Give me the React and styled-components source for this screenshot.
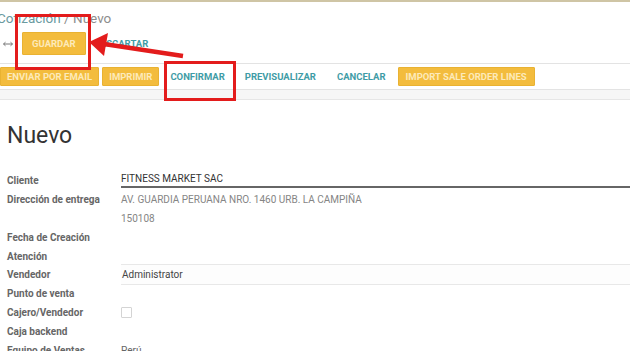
import styled, { createGlobalStyle } from 'styled-components';

const Global = createGlobalStyle`
   html, body {
      margin: 0;
      padding: 0;
      background: #ffffff;
   }
   body {
      font-family: Roboto, "Liberation Sans", Arial, sans-serif;
      overflow: hidden;
   }
`;

const Page = styled.div`
   position: relative;
   width: 630px;
   height: 351px;
   overflow: hidden;
   border-top: 2px solid #cfc5a5;
   box-sizing: border-box;
`;

const ControlPanel = styled.header`
   height: 61px;
   border-bottom: 1px solid #e3e3e3;
   display: flex;
   flex-direction: column;
`;

const Breadcrumb = styled.div`
   margin: 6px 0 0 -3px;
   font-size: 13.5px;
   line-height: 20px;
   color: #8d8d8d;
   white-space: nowrap;

   .crumb {
      color: #6a9a9f;
   }
`;

const ButtonRow = styled.div`
   display: flex;
   align-items: center;
   margin-top: 4px;
   padding-left: 3px;
   gap: 8px;
`;

const ToggleIcon = styled.span`
   width: 11px;
   display: flex;
   align-items: center;
   color: #777;
`;

const Button = styled.button`
   height: ${(p) => (p.$big ? 23 : 19)}px;
   padding: 0 ${(p) => p.$pad}px;
   margin-left: ${(p) => p.$shift || 0}px;
   border: 1px solid ${(p) => (p.$primary ? '#e9b232' : 'transparent')};
   border-radius: 1px;
   background: ${(p) => (p.$primary ? '#f3bc3d' : 'transparent')};
   color: ${(p) => (p.$primary ? '#fdeab9' : '#3f9ca6')};
   font-family: Roboto, "Liberation Sans", Arial, sans-serif;
   font-weight: 700;
   font-size: 9.5px;
   text-transform: uppercase;
   white-space: nowrap;
   cursor: pointer;
`;

const StatusBar = styled.div`
   height: 25px;
   border-bottom: 1px solid #e3e3e3;
   display: flex;
   align-items: center;
   gap: 3px;
`;

const Gap = styled.div`
   height: 9px;
   background: #f6f6f6;
   border-bottom: 1px solid #e6e6e6;
`;

const Sheet = styled.main`
   padding: 22px 0 0 7px;
`;

const Title = styled.h1`
   margin: 0 0 21px;
   font-size: 23px;
   line-height: 28px;
   font-weight: 400;
   color: #333;
`;

const Fields = styled.div`
   display: grid;
   grid-template-columns: 114px 1fr;
   grid-auto-rows: 18.9px;
   align-items: center;
`;

const Label = styled.div`
   font-size: 10px;
   font-weight: 700;
   color: #666;
   white-space: nowrap;
`;

const Value = styled.div`
   font-size: 10px;
   color: ${(p) => p.$color || '#444'};
   white-space: nowrap;
`;

const UnderlinedValue = styled.div`
   font-size: 10px;
   color: #333;
   height: 15px;
   line-height: 16px;
   margin-top: -1px;
   border-bottom: 2px solid #666;
   white-space: nowrap;
`;

const InputBox = styled.div`
   height: 19px;
   line-height: 19px;
   border-top: 1px solid #e8e8e8;
   border-bottom: 1px solid #e8e8e8;
   background: #fdfdfd;
   font-size: 10px;
   color: #444;
   padding-left: 1px;
`;

const Checkbox = styled.span`
   display: block;
   width: 9px;
   height: 9px;
   border: 1px solid #d4d4d4;
   border-radius: 1px;
   background: #fff;
`;

const Highlight = styled.div`
   position: absolute;
   left: ${(p) => p.$x}px;
   top: ${(p) => p.$y}px;
   width: ${(p) => p.$w}px;
   height: ${(p) => p.$h}px;
   border: 3px solid #e31c1c;
   box-sizing: border-box;
   pointer-events: none;
`;

const ArrowLayer = styled.svg`
   position: absolute;
   left: 0;
   top: 0;
   pointer-events: none;
`;

const fields = [
   { label: 'Cliente', kind: 'underline', value: 'FITNESS MARKET SAC' },
   { label: 'Dirección de entrega', value: 'AV. GUARDIA PERUANA NRO. 1460 URB. LA CAMPIÑA', color: '#858585' },
   { label: '', value: '150108', color: '#858585' },
   { label: 'Fecha de Creación' },
   { label: 'Atención' },
   { label: 'Vendedor', kind: 'input', value: 'Administrator' },
   { label: 'Punto de venta' },
   { label: 'Cajero/Vendedor', kind: 'check' },
   { label: 'Caja backend' },
   { label: 'Equipo de Ventas', value: 'Perú', color: '#666' },
];

function FieldValue({ field }) {
   if (field.kind === 'underline') return <UnderlinedValue>{field.value}</UnderlinedValue>;
   if (field.kind === 'input') return <InputBox>{field.value}</InputBox>;
   if (field.kind === 'check') return <Checkbox />;
   return <Value $color={field.color}>{field.value}</Value>;
}

function FieldRow({ field }) {
   return (
      <>
         <Label>{field.label}</Label>
         <FieldValue field={field} />
      </>
   );
}

export default function App() {
   return (
      <>
         <Global />
         <Page>
            <ControlPanel>
               <Breadcrumb>
                  <span className='crumb'>Cotización</span> / Nuevo
               </Breadcrumb>
               <ButtonRow>
                  <ToggleIcon>
                     <svg width='10' height='6' viewBox='0 0 10 6'>
                        <path d='M0.5 3 H9.5 M0.5 3 L2.5 1.2 M0.5 3 L2.5 4.8 M9.5 3 L7.5 1.2 M9.5 3 L7.5 4.8' stroke='#777' strokeWidth='1' fill='none' />
                     </svg>
                  </ToggleIcon>
                  <Button $primary $big $pad={9}>Guardar</Button>
                  <Button $pad={4} $shift={-4}>Descartar</Button>
               </ButtonRow>
            </ControlPanel>

            <StatusBar>
               <Button $primary $pad={6}>Enviar por email</Button>
               <Button $primary $pad={6}>Imprimir</Button>
               <Button $pad={7}>Confirmar</Button>
               <Button $pad={8}>Previsualizar</Button>
               <Button $pad={8}>Cancelar</Button>
               <Button $primary $pad={7}>Import sale order lines</Button>
            </StatusBar>
            <Gap />

            <Sheet>
               <Title>Nuevo</Title>
               <Fields>
                  {fields.map((f, i) => (
                     <FieldRow key={i} field={f} />
                  ))}
               </Fields>
            </Sheet>

            <Highlight $x={15} $y={12} $w={76} $h={56} />
            <Highlight $x={164} $y={59} $w={72} $h={40} />
            <ArrowLayer width='630' height='351' viewBox='0 0 630 351'>
               <line x1='183' y1='54' x2='104' y2='42' stroke='#e31c1c' strokeWidth='4.5' />
               <polygon points='89,40 108,31 104,54' fill='#e31c1c' />
            </ArrowLayer>
         </Page>
      </>
   );
}
